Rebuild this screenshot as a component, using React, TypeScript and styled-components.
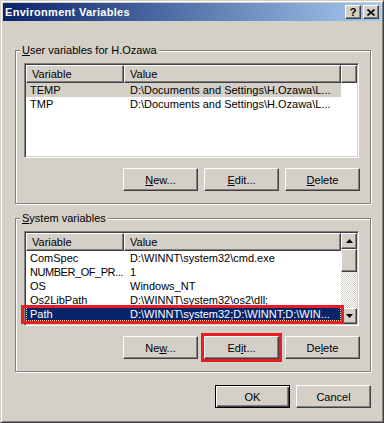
import styled, { createGlobalStyle, css } from 'styled-components';

const GlobalStyle = createGlobalStyle`
  html, body {
    margin: 0;
    padding: 0;
    background: #d4d0c8;
  }
  body {
    font-family: 'Liberation Sans', Arial, sans-serif;
    font-size: 11px;
    color: #000;
  }
  * {
    box-sizing: border-box;
  }
`;

const Window = styled.div`
  width: 384px;
  height: 423px;
  background: #d4d0c8;
  border: 1px solid;
  border-color: #d4d0c8 #404040 #404040 #d4d0c8;
  box-shadow: inset 1px 1px #fff, inset -1px -1px #808080;
  padding: 2px;
  display: flex;
  flex-direction: column;
`;

const TitleBar = styled.div`
  height: 18px;
  flex-shrink: 0;
  display: flex;
  align-items: center;
  gap: 2px;
  padding: 0 2px;
  background: linear-gradient(to right, #0a246a, #a6caf0);
`;

const Title = styled.span`
  flex: 1;
  color: #fff;
  font-weight: bold;
  letter-spacing: 0.3px;
  white-space: nowrap;
`;

const raised = css`
  background: #d4d0c8;
  border: 1px solid;
  border-color: #fff #404040 #404040 #fff;
  box-shadow: inset -1px -1px #808080, inset 1px 1px #d4d0c8;
`;

const CaptionButton = styled.div`
  ${raised};
  width: 16px;
  height: 14px;
  display: flex;
  align-items: center;
  justify-content: center;
  font-weight: bold;
  font-size: 11px;
  line-height: 1;
`;

const Group = styled.fieldset<{ $top: number }>`
  margin: ${({ $top }) => $top}px 10px 0 12px;
  width: 356px;
  min-width: 0;
  border: 1px solid #808080;
  box-shadow: inset 1px 1px #fff, 1px 1px #fff;
  padding: 6px 10px 12px 8px;
`;

const Legend = styled.legend`
  margin-left: -4px;
  padding: 0 2px;
  line-height: 13px;
  background: #d4d0c8;
`;

const ListView = styled.div`
  width: 335px;
  height: 95px;
  display: flex;
  padding: 1px;
  background: #fff;
  border: 1px solid;
  border-color: #808080 #fff #fff #808080;
  box-shadow: inset 1px 1px #404040, inset -1px -1px #d4d0c8;
`;

const ListMain = styled.div`
  flex: 1;
  display: flex;
  flex-direction: column;
  min-width: 0;
`;

const HeaderRow = styled.div`
  display: flex;
  height: 18px;
  flex-shrink: 0;
`;

const HeaderCell = styled.div<{ $w?: number }>`
  ${raised};
  ${({ $w }) => ($w ? `width: ${$w}px;` : 'flex: 1;')}
  padding-left: 5px;
  line-height: 16px;
  white-space: nowrap;
`;

const Row = styled.div<{ $sel?: 'inactive' | 'active' }>`
  position: relative;
  display: flex;
  width: 315px;
  height: 14px;
  line-height: 14px;
  white-space: nowrap;
  ${({ $sel }) =>
    $sel === 'inactive' &&
    css`
      background: #d4d0c8;
    `}
  ${({ $sel }) =>
    $sel === 'active' &&
    css`
      background: #0a246a;
      color: #fff;
      outline: 1px dotted #e6e28c;
      outline-offset: -1px;
      &::after {
        content: '';
        position: absolute;
        left: -5px;
        right: -3px;
        top: -2px;
        bottom: -3px;
        border: 3px solid #ec1c24;
      }
    `}
`;

const Cell = styled.div<{ $w: number; $pl: number; $squeeze?: boolean }>`
  width: ${({ $w }) => $w}px;
  padding-left: ${({ $pl }) => $pl}px;
  overflow: hidden;
  ${({ $squeeze }) => $squeeze && 'letter-spacing: -0.45px;'}
`;

const ScrollBar = styled.div`
  width: 16px;
  display: flex;
  flex-direction: column;
`;

const ScrollButton = styled.div`
  ${raised};
  height: 16px;
  flex-shrink: 0;
  display: flex;
  align-items: center;
  justify-content: center;
`;

const Thumb = styled.div`
  ${raised};
  height: 23px;
  flex-shrink: 0;
`;

const Track = styled.div`
  flex: 1;
  background: repeating-conic-gradient(#d4d0c8 0 25%, #fff 0 50%) 0 0 / 2px 2px;
`;

const ButtonRow = styled.div<{ $mt: number }>`
  display: flex;
  justify-content: flex-end;
  gap: 6px;
  margin-top: ${({ $mt }) => $mt}px;
`;

const Button = styled.button<{ $default?: boolean; $marked?: boolean }>`
  ${raised};
  width: 75px;
  height: 23px;
  padding: 0;
  font: inherit;
  color: #000;
  ${({ $default }) =>
    $default &&
    css`
      border-color: #000;
      box-shadow: inset 1px 1px #fff, inset -1px -1px #404040,
        inset -2px -2px #808080;
    `}
  ${({ $marked }) =>
    $marked &&
    css`
      outline: 3px solid #ec1c24;
      outline-offset: 0;
    `}
`;

const Footer = styled(ButtonRow)`
  margin-right: 10px;
`;

const Arrow = ({ down }: { down?: boolean }) => (
  <svg width="7" height="4" viewBox="0 0 7 4">
    <path d={down ? 'M0 0h7L3.5 4z' : 'M3.5 0L7 4H0z'} fill="#000" />
  </svg>
);

const CloseGlyph = () => (
  <svg width="8" height="7" viewBox="0 0 8 7">
    <path d="M0.5 0.5L7.5 6.5M7.5 0.5L0.5 6.5" stroke="#000" strokeWidth="1.6" />
  </svg>
);

type Var = {
  name: string;
  value: string;
  sel?: 'inactive' | 'active';
  squeeze?: boolean;
};

const userVars: Var[] = [
  { name: 'TEMP', value: 'D:\\Documents and Settings\\H.Ozawa\\L...', sel: 'inactive' },
  { name: 'TMP', value: 'D:\\Documents and Settings\\H.Ozawa\\L...' },
];

const systemVars: Var[] = [
  { name: 'ComSpec', value: 'D:\\WINNT\\system32\\cmd.exe' },
  { name: 'NUMBER_OF_PR...', value: '1', squeeze: true },
  { name: 'OS', value: 'Windows_NT' },
  { name: 'Os2LibPath', value: 'D:\\WINNT\\system32\\os2\\dll;' },
  { name: 'Path', value: 'D:\\WINNT\\system32;D:\\WINNT;D:\\WIN...', sel: 'active' },
];

const Rows = ({ vars }: { vars: Var[] }) => (
  <>
    {vars.map((v) => (
      <Row key={v.name} $sel={v.sel}>
        <Cell $w={98} $pl={4} $squeeze={v.squeeze}>
          {v.name}
        </Cell>
        <Cell $w={217} $pl={6}>
          {v.value}
        </Cell>
      </Row>
    ))}
  </>
);

export default function App() {
  return (
    <>
      <GlobalStyle />
      <Window>
        <TitleBar>
          <Title>Environment Variables</Title>
          <CaptionButton>?</CaptionButton>
          <CaptionButton>
            <CloseGlyph />
          </CaptionButton>
        </TitleBar>

        <Group $top={23}>
          <Legend>
            <u>U</u>ser variables for H.Ozawa
          </Legend>
          <ListView>
            <ListMain>
              <HeaderRow>
                <HeaderCell $w={98}>Variable</HeaderCell>
                <HeaderCell $w={217}>Value</HeaderCell>
                <HeaderCell />
              </HeaderRow>
              <Rows vars={userVars} />
            </ListMain>
          </ListView>
          <ButtonRow $mt={10}>
            <Button>
              <u>N</u>ew...
            </Button>
            <Button>
              <u>E</u>dit...
            </Button>
            <Button>
              <u>D</u>elete
            </Button>
          </ButtonRow>
        </Group>

        <Group $top={8}>
          <Legend>
            <u>S</u>ystem variables
          </Legend>
          <ListView>
            <ListMain>
              <HeaderRow>
                <HeaderCell $w={98}>Variable</HeaderCell>
                <HeaderCell $w={217}>Value</HeaderCell>
              </HeaderRow>
              <Rows vars={systemVars} />
            </ListMain>
            <ScrollBar>
              <ScrollButton>
                <Arrow />
              </ScrollButton>
              <Thumb />
              <Track />
              <ScrollButton>
                <Arrow down />
              </ScrollButton>
            </ScrollBar>
          </ListView>
          <ButtonRow $mt={10}>
            <Button>
              Ne<u>w</u>...
            </Button>
            <Button $marked>
              Ed<u>i</u>t...
            </Button>
            <Button>
              De<u>l</u>ete
            </Button>
          </ButtonRow>
        </Group>

        <Footer $mt={13}>
          <Button $default>OK</Button>
          <Button>Cancel</Button>
        </Footer>
      </Window>
    </>
  );
}
